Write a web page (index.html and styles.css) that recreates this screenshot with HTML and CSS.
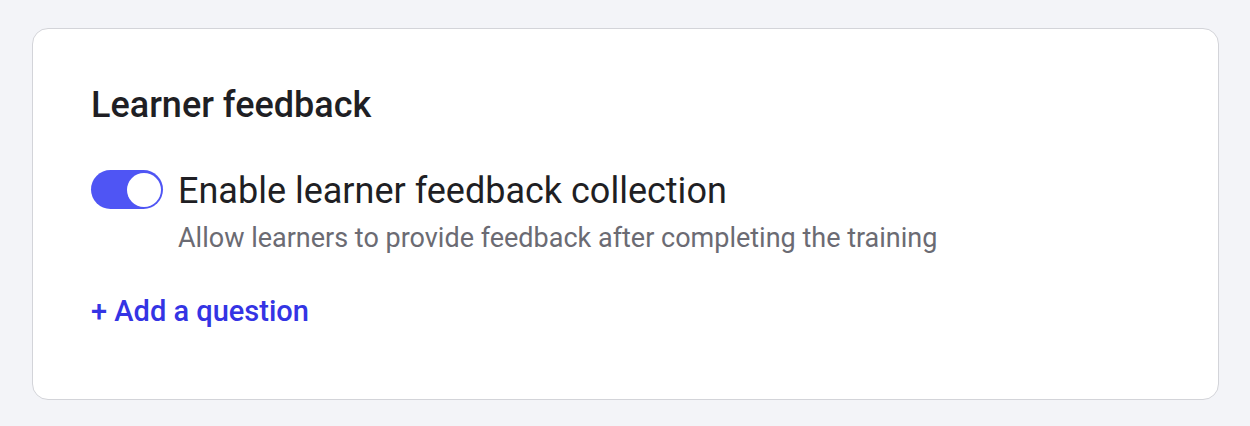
FILE: index.html
```html
<!DOCTYPE html>
<html>
<head>
<meta charset="utf-8">
<link rel="stylesheet" href="styles.css">
</head>
<body>
<div class="page">
  <section class="card">
    <h2 class="title">Learner feedback</h2>
    <div class="setting">
      <span class="toggle"><span class="knob"></span></span>
      <div class="setting-text">
        <div class="label">Enable learner feedback collection</div>
        <div class="desc">Allow learners to provide feedback after completing the training</div>
      </div>
    </div>
    <a class="add-link" href="#">+ Add a question</a>
  </section>
</div>
</body>
</html>
```

FILE: styles.css
```css
html, body {
  margin: 0;
  padding: 0;
}
body {
  background: #f3f4f8;
  font-family: Roboto, "Noto Sans", Arial, sans-serif;
  width: 1250px;
  height: 426px;
  overflow: hidden;
}
.page {
  padding: 28px 31px 0 32px;
}
.card {
  box-sizing: border-box;
  height: 372px;
  background: #ffffff;
  border: 1px solid #d3d4d9;
  border-radius: 16px;
  padding: 56px 58px 0 58px;
  display: flex;
  flex-direction: column;
  align-items: flex-start;
}
.title {
  margin: 0;
  font-size: 36px;
  line-height: 41px;
  font-weight: 500;
  color: #1f1f24;
}
.setting {
  display: flex;
  align-items: flex-start;
  gap: 15px;
  margin-top: 44px;
}
.toggle {
  flex: none;
  box-sizing: border-box;
  width: 72px;
  height: 39px;
  border-radius: 20px;
  background: #4f55f4;
  padding: 2px 2px;
  display: flex;
  justify-content: flex-end;
  align-items: center;
}
.knob {
  width: 34px;
  height: 34px;
  border-radius: 50%;
  background: #ffffff;
}
.label {
  font-size: 36px;
  line-height: 42px;
  color: #1f1f24;
}
.desc {
  margin-top: 10px;
  font-size: 27px;
  line-height: 32px;
  color: #6b6b73;
}
.add-link {
  margin-top: 40px;
  font-size: 29px;
  line-height: 34px;
  font-weight: 500;
  color: #3434e4;
  text-decoration: none;
}
```
